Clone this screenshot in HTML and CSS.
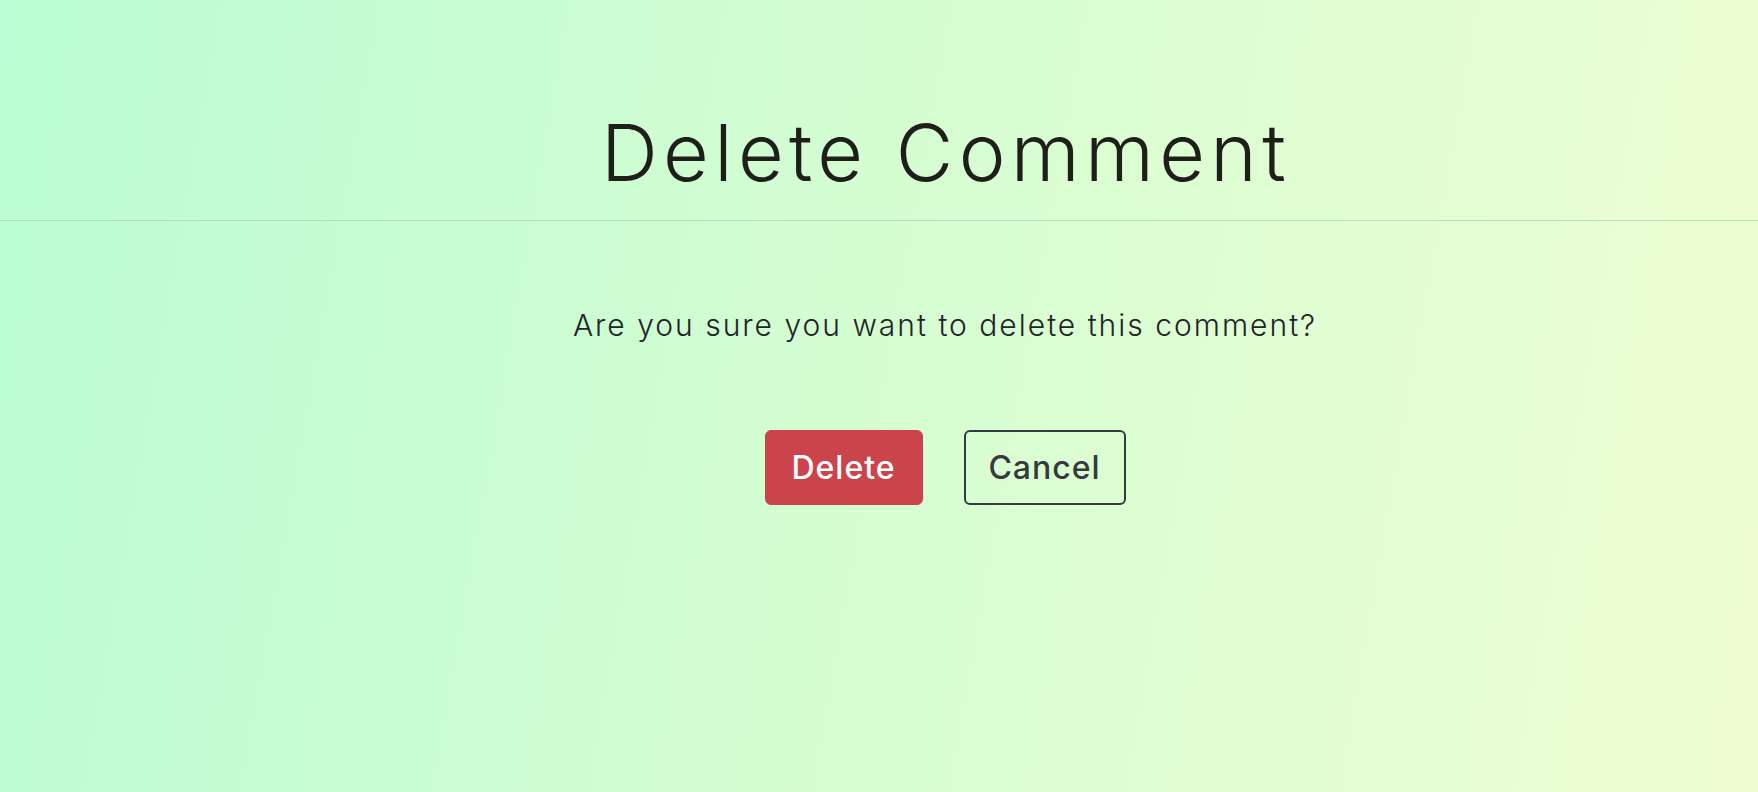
FILE: index.html
```html
<!DOCTYPE html>
<html lang="en">
<head>
<meta charset="utf-8">
<title>Delete Comment</title>
<link rel="stylesheet" href="styles.css">
</head>
<body>
<div class="page">
  <header class="page-header">
    <h1 class="title">Delete Comment</h1>
  </header>
  <main class="content">
    <p class="question">Are you sure you want to delete this comment?</p>
    <div class="actions">
      <button class="btn btn-danger" type="button">Delete</button>
      <button class="btn btn-outline" type="button">Cancel</button>
    </div>
  </main>
</div>
</body>
</html>
```
FILE: styles.css
```css
html, body {
  margin: 0;
  padding: 0;
}
body {
  font-family: Inter, "Open Sans", "Liberation Sans", sans-serif;
  color: #212529;
  background: linear-gradient(100deg, #bafcd3 0%, #d6fdd2 50%, #effed2 100%);
  min-height: 100vh;
}
.page {
  min-height: 792px;
}
.page-header {
  border-bottom: 1px solid #b3e0bb;
  padding: 100px 0 16px 134px;
  text-align: center;
}
.title {
  margin: 0;
  font-size: 79px;
  line-height: 104px;
  font-weight: 300;
  color: #1f1f1a;
  letter-spacing: 5.3px;
}
.content {
  display: flex;
  flex-direction: column;
  align-items: center;
  padding-left: 132px;
}
.question {
  margin: 84px 0 0;
  font-size: 30px;
  line-height: 40px;
  font-weight: 300;
  color: #212529;
  letter-spacing: 2px;
}
.actions {
  display: flex;
  gap: 41px;
  margin-top: 85px;
}
.btn {
  font-family: inherit;
  font-size: 32px;
  font-weight: 500;
  letter-spacing: 1px;
  height: 75px;
  border-radius: 6px;
  padding: 0;
  cursor: pointer;
}
.btn-danger {
  background: #cb444b;
  color: #ffffff;
  border: 1px solid #cb444b;
  width: 158px;
}
.btn-outline {
  background: transparent;
  color: #343a40;
  border: 2px solid #343a40;
  width: 162px;
}
```
